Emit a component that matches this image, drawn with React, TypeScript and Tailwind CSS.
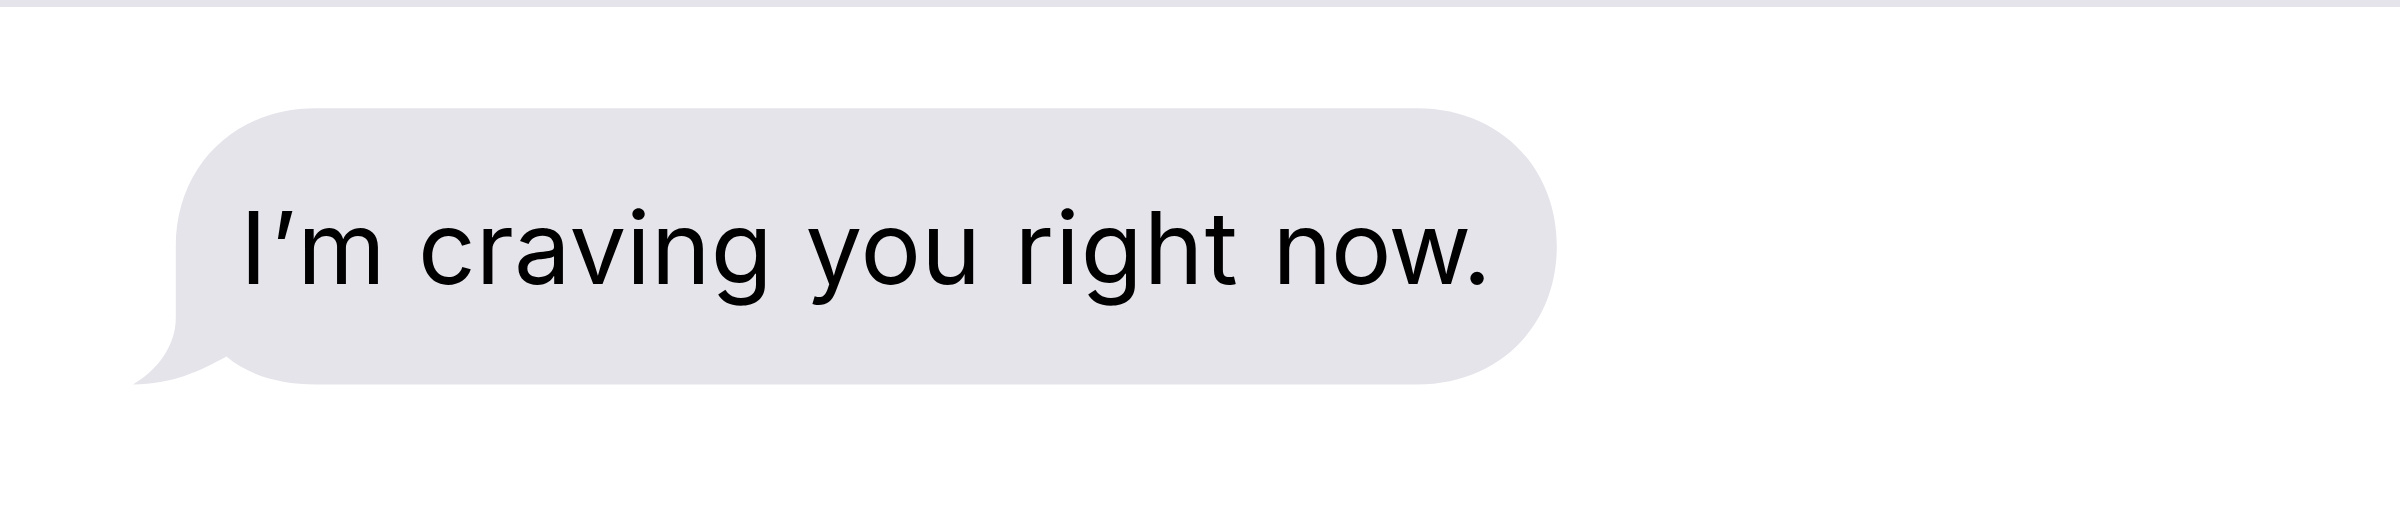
const words = [
  { text: "I’m", spacing: "w-[178px] tracking-[2.9px]" },
  { text: "craving", spacing: "w-[387.5px] tracking-[0.15px]" },
  { text: "you", spacing: "w-[209px] tracking-[0.2px]" },
  { text: "right", spacing: "w-[258px] tracking-[1.1px]" },
  { text: "now.", spacing: "w-[230px] tracking-[-1.2px]" },
];

export default function App() {
  return (
    <main className="h-[512px] w-[2400px] overflow-hidden border-t-[7px] border-[#e5e4eb] bg-white pt-[100px] pl-[133px]">
      <div className="relative flex h-[278px] w-[1425px] items-center">
        <svg className="absolute inset-0 h-full w-full" viewBox="133 107 1425 278" aria-hidden="true">
          <path fill="#e5e4eb" d="M316 108.2H1417C1499 108.2 1556.8 167 1556.8 246.3S1499 384.4 1417 384.4H316C280 384.4 248 375 226.5 356.5C200 371 172 384.4 133 384.4C158 370 175.8 345 175.8 318V246.3C175.8 167 234 108.2 316 108.2Z" />
        </svg>
        <p className="relative mt-0.5 ml-[107px] flex whitespace-nowrap font-['Inter',sans-serif] text-[101px] leading-none text-black">
          {words.map(({ text, spacing }) => (
            <span key={text} className={spacing}>{text}{" "}</span>
          ))}
        </p>
      </div>
    </main>
  );
}
